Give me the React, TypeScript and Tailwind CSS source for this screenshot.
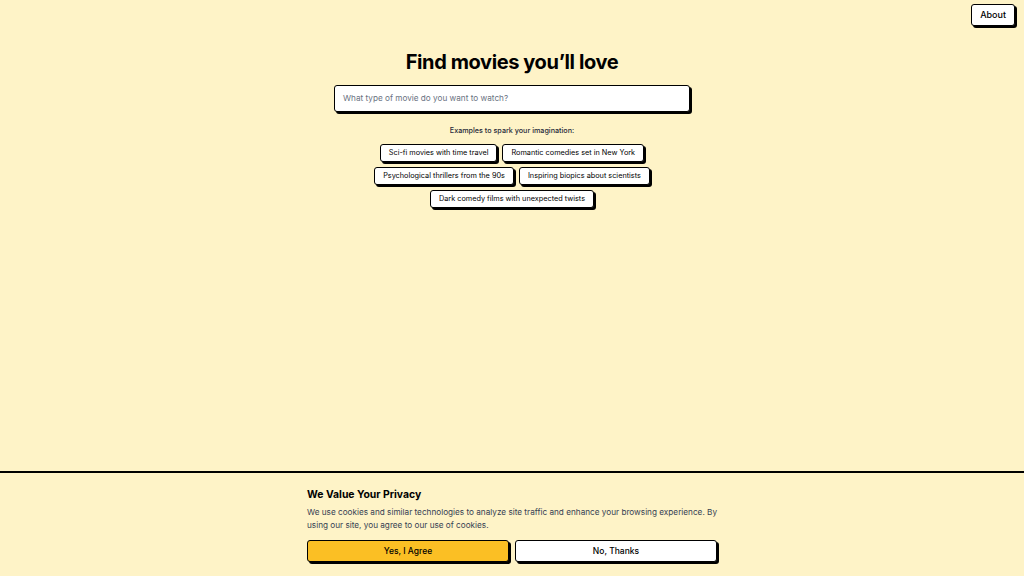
import React from "react";

const examples = [
  ["Sci-fi movies with time travel", "Romantic comedies set in New York"],
  ["Psychological thrillers from the 90s", "Inspiring biopics about scientists"],
  ["Dark comedy films with unexpected twists"],
];

function Chip({ label }: { label: string }) {
  return (
    <button className="h-[18px] px-[8px] rounded-[3px] border-[1.5px] border-black bg-white text-[7.3px] leading-none text-black shadow-[2px_2px_0_#000]">
      {label}
    </button>
  );
}

export default function App() {
  return (
    <div
      className="w-[1024px] h-[576px] bg-[#fef3c7] flex flex-col overflow-hidden text-black"
      style={{ fontFamily: "Inter, 'Noto Sans', sans-serif" }}
    >
      <header className="flex justify-end pt-[4px] pr-[9px] h-[40px]">
        <button className="h-[22px] px-[8px] rounded-[3px] border-[1.5px] border-black bg-white text-[9px] font-medium shadow-[2px_2px_0_#000]">
          About
        </button>
      </header>

      <main className="flex-1 flex flex-col items-center">
        <h1 className="mt-[10px] text-[20px] font-bold tracking-[-0.02em] leading-[24px]">
          Find movies you’ll love
        </h1>
        <div className="mt-[11px] w-[356px] h-[27px] rounded-[3px] border-[1.5px] border-black bg-white shadow-[2px_2px_0_#000] flex items-center px-[8px]">
          <span className="text-[8.2px] text-gray-500">What type of movie do you want to watch?</span>
        </div>
        <p className="mt-[14px] text-[7.2px] font-medium text-gray-800">Examples to spark your imagination:</p>
        <div className="mt-[7px] flex flex-col items-center gap-[5px]">
          {examples.map((row, i) => (
            <div key={i} className="flex gap-[5px]">
              {row.map((e) => (
                <Chip key={e} label={e} />
              ))}
            </div>
          ))}
        </div>
      </main>

      <footer className="h-[105px] border-t-[2px] border-black bg-[#fef3c7] flex justify-center">
        <div className="w-[410px] pt-[15px]">
          <h2 className="text-[10.4px] font-bold leading-[13px]">We Value Your Privacy</h2>
          <p className="mt-[5px] text-[8.2px] leading-[13px] text-gray-700">
            We use cookies and similar technologies to analyze site traffic and enhance your browsing experience. By
            using our site, you agree to our use of cookies.
          </p>
          <div className="mt-[8px] flex gap-[6px]">
            <button className="flex-1 h-[22px] rounded-[3px] border-[1.5px] border-black bg-[#fbbf24] text-[8.5px] font-medium shadow-[2px_2px_0_#000]">
              Yes, I Agree
            </button>
            <button className="flex-1 h-[22px] rounded-[3px] border-[1.5px] border-black bg-white text-[8.5px] font-medium shadow-[2px_2px_0_#000]">
              No, Thanks
            </button>
          </div>
        </div>
      </footer>
    </div>
  );
}
